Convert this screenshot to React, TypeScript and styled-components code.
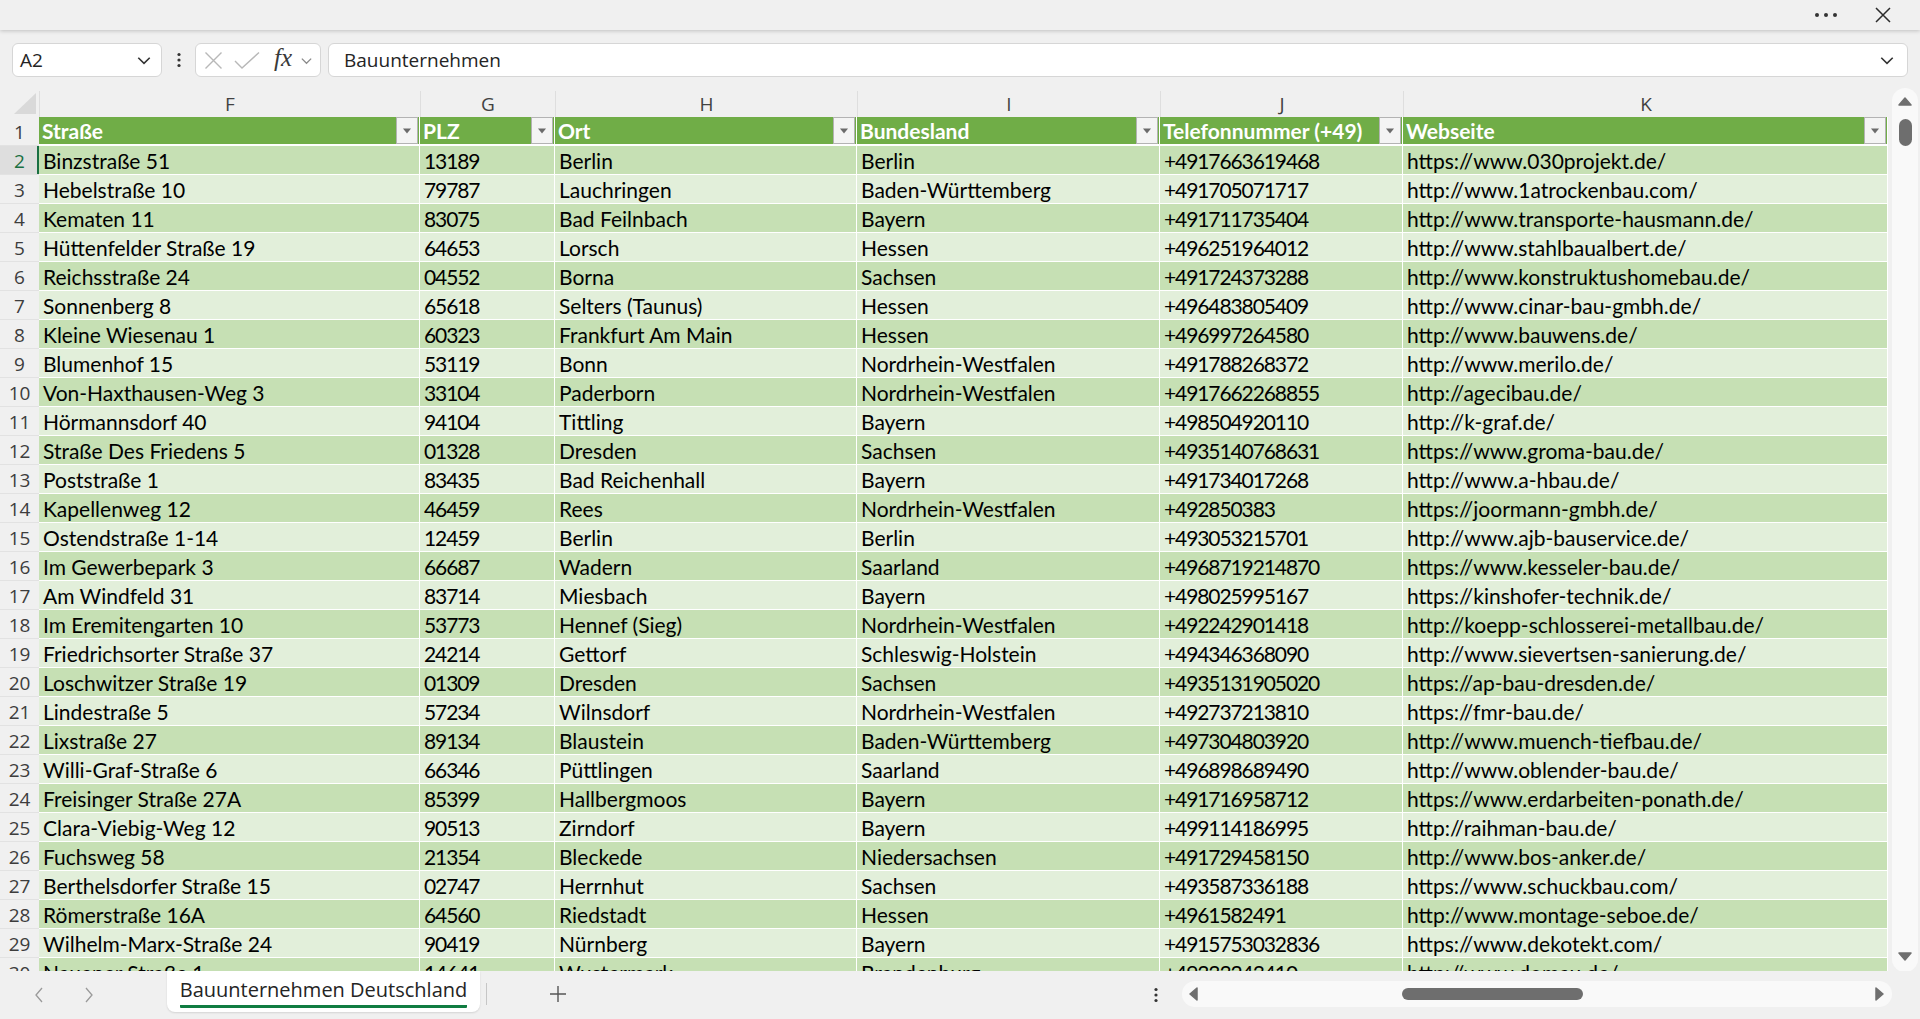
import React from "react"
import styled, { createGlobalStyle } from "styled-components"

const COLS = [39, 381, 135, 302, 303, 243, 485]
const TEMPLATE = COLS.map((w) => `${w}px`).join(" ")
const LETTERS = ["F", "G", "H", "I", "J", "K"]
const HEADERS = ["Straße", "PLZ", "Ort", "Bundesland", "Telefonnummer (+49)", "Webseite"]
// columns holding digits only (PLZ, Telefon) render a bit tighter, like Calibri figures
const NUMERIC = [false, true, false, false, true, false]

const ROWS: string[][] = [
  ["Binzstraße 51", "13189", "Berlin", "Berlin", "+4917663619468", "https://www.030projekt.de/"],
  ["Hebelstraße 10", "79787", "Lauchringen", "Baden-Württemberg", "+491705071717", "http://www.1atrockenbau.com/"],
  ["Kematen 11", "83075", "Bad Feilnbach", "Bayern", "+491711735404", "http://www.transporte-hausmann.de/"],
  ["Hüttenfelder Straße 19", "64653", "Lorsch", "Hessen", "+496251964012", "http://www.stahlbaualbert.de/"],
  ["Reichsstraße 24", "04552", "Borna", "Sachsen", "+491724373288", "http://www.konstruktushomebau.de/"],
  ["Sonnenberg 8", "65618", "Selters (Taunus)", "Hessen", "+496483805409", "http://www.cinar-bau-gmbh.de/"],
  ["Kleine Wiesenau 1", "60323", "Frankfurt Am Main", "Hessen", "+496997264580", "http://www.bauwens.de/"],
  ["Blumenhof 15", "53119", "Bonn", "Nordrhein-Westfalen", "+491788268372", "http://www.merilo.de/"],
  ["Von-Haxthausen-Weg 3", "33104", "Paderborn", "Nordrhein-Westfalen", "+4917662268855", "http://agecibau.de/"],
  ["Hörmannsdorf 40", "94104", "Tittling", "Bayern", "+498504920110", "http://k-graf.de/"],
  ["Straße Des Friedens 5", "01328", "Dresden", "Sachsen", "+4935140768631", "https://www.groma-bau.de/"],
  ["Poststraße 1", "83435", "Bad Reichenhall", "Bayern", "+491734017268", "http://www.a-hbau.de/"],
  ["Kapellenweg 12", "46459", "Rees", "Nordrhein-Westfalen", "+492850383", "https://joormann-gmbh.de/"],
  ["Ostendstraße 1-14", "12459", "Berlin", "Berlin", "+493053215701", "http://www.ajb-bauservice.de/"],
  ["Im Gewerbepark 3", "66687", "Wadern", "Saarland", "+4968719214870", "https://www.kesseler-bau.de/"],
  ["Am Windfeld 31", "83714", "Miesbach", "Bayern", "+498025995167", "https://kinshofer-technik.de/"],
  ["Im Eremitengarten 10", "53773", "Hennef (Sieg)", "Nordrhein-Westfalen", "+492242901418", "http://koepp-schlosserei-metallbau.de/"],
  ["Friedrichsorter Straße 37", "24214", "Gettorf", "Schleswig-Holstein", "+494346368090", "http://www.sievertsen-sanierung.de/"],
  ["Loschwitzer Straße 19", "01309", "Dresden", "Sachsen", "+4935131905020", "https://ap-bau-dresden.de/"],
  ["Lindestraße 5", "57234", "Wilnsdorf", "Nordrhein-Westfalen", "+492737213810", "https://fmr-bau.de/"],
  ["Lixstraße 27", "89134", "Blaustein", "Baden-Württemberg", "+497304803920", "http://www.muench-tiefbau.de/"],
  ["Willi-Graf-Straße 6", "66346", "Püttlingen", "Saarland", "+496898689490", "http://www.oblender-bau.de/"],
  ["Freisinger Straße 27A", "85399", "Hallbergmoos", "Bayern", "+491716958712", "https://www.erdarbeiten-ponath.de/"],
  ["Clara-Viebig-Weg 12", "90513", "Zirndorf", "Bayern", "+499114186995", "http://raihman-bau.de/"],
  ["Fuchsweg 58", "21354", "Bleckede", "Niedersachsen", "+491729458150", "http://www.bos-anker.de/"],
  ["Berthelsdorfer Straße 15", "02747", "Herrnhut", "Sachsen", "+493587336188", "https://www.schuckbau.com/"],
  ["Römerstraße 16A", "64560", "Riedstadt", "Hessen", "+4961582491", "http://www.montage-seboe.de/"],
  ["Wilhelm-Marx-Straße 24", "90419", "Nürnberg", "Bayern", "+4915753032836", "https://www.dekotekt.com/"],
  ["Nauener Straße 1", "14641", "Wustermark", "Brandenburg", "+49333243410", "http://www.domau.de/"],
]

const GlobalStyle = createGlobalStyle`
  html, body {
    margin: 0;
    height: 100%;
    overflow: hidden;
    background: #f0f0f0;
  }
  body {
    font-family: "Open Sans", "Noto Sans", sans-serif;
    color: #242424;
  }
`

const Chevron = ({ size = 14, color = "#444" }: { size?: number; color?: string }) => (
  <svg width={size} height={size} viewBox="0 0 14 14">
    <path d="M2 5 L7 10 L12 5" fill="none" stroke={color} strokeWidth="1.4" />
  </svg>
)

const Triangle = ({ dir, color = "#6f6f6f" }: { dir: "up" | "down" | "left" | "right"; color?: string }) => {
  const pts = {
    up: "1,9 7,2 13,9",
    down: "1,3 13,3 7,10",
    left: "9,1 9,13 2,7",
    right: "4,1 4,13 11,7",
  }[dir]
  return (
    <svg width="14" height="14" viewBox="0 0 14 14">
      <polygon points={pts} fill={color} strokeLinejoin="round" stroke={color} strokeWidth="1.5" />
    </svg>
  )
}

const VDots = () => (
  <svg width="4" height="16" viewBox="0 0 4 16">
    <circle cx="2" cy="2.5" r="1.6" fill="#333" />
    <circle cx="2" cy="8" r="1.6" fill="#333" />
    <circle cx="2" cy="13.5" r="1.6" fill="#333" />
  </svg>
)

export default function App() {
  return (
    <>
      <GlobalStyle />
      <Page>
        <TitleBar>
          <svg width="24" height="6" viewBox="0 0 24 6">
            <circle cx="3" cy="3" r="2" fill="#333" />
            <circle cx="12" cy="3" r="2" fill="#333" />
            <circle cx="21" cy="3" r="2" fill="#333" />
          </svg>
          <svg width="16" height="16" viewBox="0 0 16 16">
            <path d="M1 1 L15 15 M15 1 L1 15" stroke="#2b2b2b" strokeWidth="1.5" />
          </svg>
        </TitleBar>

        <FormulaRow>
          <NameBox>
            <span>A2</span>
            <Chevron size={16} color="#333" />
          </NameBox>
          <Kebab>
            <VDots />
          </Kebab>
          <FxBox>
            <svg width="19" height="19" viewBox="0 0 19 19">
              <path d="M1.5 1.5 L17.5 17.5 M17.5 1.5 L1.5 17.5" stroke="#b8b8b8" strokeWidth="1.4" />
            </svg>
            <CheckIcon width="28" height="19" viewBox="0 0 28 19">
              <path d="M2 10 L9 17 L26 1.5" fill="none" stroke="#b8b8b8" strokeWidth="1.4" />
            </CheckIcon>
            <FxLabel>fx</FxLabel>
            <FxChevron>
              <Chevron size={13} color="#8a8a8a" />
            </FxChevron>
          </FxBox>
          <FormulaInput>
            <span>Bauunternehmen</span>
            <Chevron size={16} color="#333" />
          </FormulaInput>
        </FormulaRow>

        <Main>
          <Sheet>
            <GridRow $height={26}>
              <Corner>
                <svg width="22" height="21" viewBox="0 0 22 21">
                  <polygon points="22,0 22,21 0,21" fill="#d9d9d9" />
                </svg>
              </Corner>
              {LETTERS.map((l) => (
                <ColLetter key={l}>{l}</ColLetter>
              ))}
            </GridRow>

            <GridRow $height={29}>
              <RowNum>1</RowNum>
              {HEADERS.map((h) => (
                <HeadCell key={h}>
                  <span>{h}</span>
                  <FilterButton>
                    <svg width="10" height="6" viewBox="0 0 10 6">
                      <polygon points="1,0.5 9,0.5 5,5.5" fill="#6b6b6b" />
                    </svg>
                  </FilterButton>
                </HeadCell>
              ))}
            </GridRow>

            {ROWS.map((row, i) => (
              <GridRow key={i} $height={29}>
                <RowNum $active={i === 0}>{i + 2}</RowNum>
                {row.map((c, j) => (
                  <Cell key={j} $band={i % 2 === 0} $numeric={NUMERIC[j]}>
                    {c}
                  </Cell>
                ))}
              </GridRow>
            ))}
          </Sheet>

          <VScroll>
            <Triangle dir="up" />
            <VThumb />
            <Spacer />
            <Triangle dir="down" />
          </VScroll>
        </Main>

        <BottomBar>
          <NavArrows>
            <svg width="10" height="18" viewBox="0 0 10 18">
              <path d="M8 2 L2 9 L8 16" fill="none" stroke="#9a9a9a" strokeWidth="1.3" />
            </svg>
            <svg width="10" height="18" viewBox="0 0 10 18">
              <path d="M2 2 L8 9 L2 16" fill="none" stroke="#9a9a9a" strokeWidth="1.3" />
            </svg>
          </NavArrows>
          <SheetTab>
            <TabLabel>Bauunternehmen Deutschland</TabLabel>
          </SheetTab>
          <TabDivider />
          <AddSheet>
            <svg width="20" height="20" viewBox="0 0 20 20">
              <path d="M10 2 V18 M2 10 H18" stroke="#555" strokeWidth="1.4" />
            </svg>
          </AddSheet>
          <Spacer />
          <BottomKebab>
            <VDots />
          </BottomKebab>
          <HScroll>
            <Triangle dir="left" />
            <HThumb />
            <Spacer />
            <Triangle dir="right" />
          </HScroll>
        </BottomBar>
      </Page>
    </>
  )
}

const Page = styled.div`
  display: flex;
  flex-direction: column;
  height: 100vh;
  width: 100vw;
  overflow: hidden;
`

const TitleBar = styled.div`
  position: relative;
  z-index: 2;
  flex: 0 0 30px;
  display: flex;
  align-items: center;
  justify-content: flex-end;
  gap: 37px;
  padding-right: 29px;
  background: #f0f0f0;
  box-shadow: 0 1px 4px rgba(0, 0, 0, 0.2);
`

const FormulaRow = styled.div`
  flex: 0 0 auto;
  display: flex;
  align-items: center;
  padding: 13px 12px 11px 12px;
  font-size: 18px;
  color: #242424;
`

const boxBase = `
  box-sizing: border-box;
  height: 34px;
  background: #ffffff;
  border: 1px solid #d6d6d6;
  border-radius: 6px;
  display: flex;
  align-items: center;
`

const NameBox = styled.div`
  ${boxBase}
  width: 150px;
  justify-content: space-between;
  padding: 0 9px 0 7px;
  font-size: 19px;
`

const Kebab = styled.div`
  width: 33px;
  display: flex;
  justify-content: center;
  align-items: center;
`

const FxBox = styled.div`
  ${boxBase}
  width: 126px;
  padding: 0 0 0 8px;
  overflow: hidden;
`

const CheckIcon = styled.svg`
  flex: none;
  margin-left: 10px;
`

const FxLabel = styled.span`
  flex: none;
  font-family: "Liberation Serif", "DejaVu Serif", serif;
  font-style: italic;
  font-size: 25px;
  color: #3a3a3a;
  margin: -4px 0 0 13px;
`

const FxChevron = styled.span`
  flex: none;
  display: flex;
  margin-left: 8px;
`

const FormulaInput = styled.div`
  ${boxBase}
  flex: 1;
  margin-left: 7px;
  justify-content: space-between;
  padding: 0 12px 0 15px;
  font-size: 19px;
`

const Main = styled.div`
  flex: 0 0 883px;
  display: flex;
  overflow: hidden;
`

const Sheet = styled.div`
  width: 1888px;
  padding-top: 3px;
  overflow: hidden;
`

const GridRow = styled.div<{ $height: number }>`
  display: grid;
  grid-template-columns: ${TEMPLATE};
  height: ${(p) => p.$height}px;
`

const Corner = styled.div`
  display: flex;
  justify-content: flex-end;
  align-items: flex-start;
  padding: 2px 3px 0 0;
  border-bottom: 2px solid #c4c4c4;
  box-sizing: border-box;
`

const ColLetter = styled.div`
  display: flex;
  align-items: center;
  justify-content: center;
  font-size: 19px;
  color: #424242;
  border-left: 1px solid #dedede;
  border-bottom: 2px solid #c4c4c4;
  box-sizing: border-box;
`

const RowNum = styled.div<{ $active?: boolean }>`
  display: flex;
  align-items: center;
  justify-content: center;
  padding-top: 1px;
  font-size: 19px;
  color: ${(p) => (p.$active ? "#1a7043" : "#3d3d3d")};
  background: ${(p) => (p.$active ? "#dedede" : "#f0f0f0")};
  border-bottom: 1px solid #e2e2e2;
  box-shadow: ${(p) => (p.$active ? "inset -2px 0 0 #1a7043" : "none")};
  box-sizing: border-box;
`

const cellFont = `
  font-family: Lato, "Open Sans", sans-serif;
  font-size: 21px;
`

const HeadCell = styled.div`
  ${cellFont}
  font-weight: 700;
  color: #ffffff;
  background: #70ad47;
  display: flex;
  align-items: center;
  justify-content: space-between;
  padding-left: 3px;
  border-right: 1px solid #ffffff;
  border-bottom: 2px solid #ffffff;
  box-sizing: border-box;
  white-space: nowrap;
  overflow: hidden;
`

const FilterButton = styled.div`
  align-self: stretch;
  width: 22px;
  box-sizing: border-box;
  margin-right: 1px;
  background: #f4f4f4;
  border: 1px solid #b3b3b3;
  display: flex;
  align-items: center;
  justify-content: center;
`

const Cell = styled.div<{ $band: boolean; $numeric: boolean }>`
  ${cellFont}
  color: #000000;
  background: ${(p) => (p.$band ? "#c6e0b4" : "#e2efda")};
  letter-spacing: ${(p) => (p.$numeric ? "-1.1px" : "0")};
  display: flex;
  align-items: center;
  padding: 1px 0 0 4px;
  border-right: 1px solid #ffffff;
  border-bottom: 1px solid #ffffff;
  box-sizing: border-box;
  white-space: nowrap;
  overflow: hidden;
`

const VScroll = styled.div`
  margin-left: 4px;
  width: 26px;
  height: 884px;
  background: #f9f9f9;
  border-radius: 13px;
  display: flex;
  flex-direction: column;
  align-items: center;
  padding: 8px 0 8px 0;
  box-sizing: border-box;
`

const VThumb = styled.div`
  width: 13px;
  height: 27px;
  margin-top: 9px;
  border-radius: 7px;
  background: #6e6e6e;
`

const Spacer = styled.div`
  flex: 1;
`

const BottomBar = styled.div`
  flex: 1;
  display: flex;
  align-items: flex-start;
  background: #f0f0f0;
`

const NavArrows = styled.div`
  display: flex;
  gap: 40px;
  padding: 15px 0 0 34px;
`

const SheetTab = styled.div`
  margin-left: 73px;
  width: 313px;
  height: 41px;
  background: #ffffff;
  border-radius: 0 0 8px 8px;
  box-shadow: 0 1px 2px rgba(0, 0, 0, 0.12);
  display: flex;
  justify-content: center;
  align-items: flex-end;
`

const TabLabel = styled.span`
  font-size: 20px;
  color: #242424;
  line-height: 26px;
  padding-bottom: 2px;
  margin-bottom: 4px;
  border-bottom: 3px solid #107c41;
  border-radius: 1px;
`

const TabDivider = styled.div`
  width: 1px;
  height: 22px;
  margin: 12px 0 0 6px;
  background: #c6c6c6;
`

const AddSheet = styled.div`
  margin: 13px 0 0 61px;
  display: flex;
`

const BottomKebab = styled.div`
  margin: 16px 24px 0 0;
  display: flex;
`

const HScroll = styled.div`
  margin: 10px 28px 0 0;
  width: 710px;
  height: 26px;
  background: #f9f9f9;
  border-radius: 13px;
  display: flex;
  align-items: center;
  padding: 0 6px;
  box-sizing: border-box;
`

const HThumb = styled.div`
  width: 181px;
  height: 12px;
  margin-left: 200px;
  border-radius: 6px;
  background: #6e6e6e;
`
